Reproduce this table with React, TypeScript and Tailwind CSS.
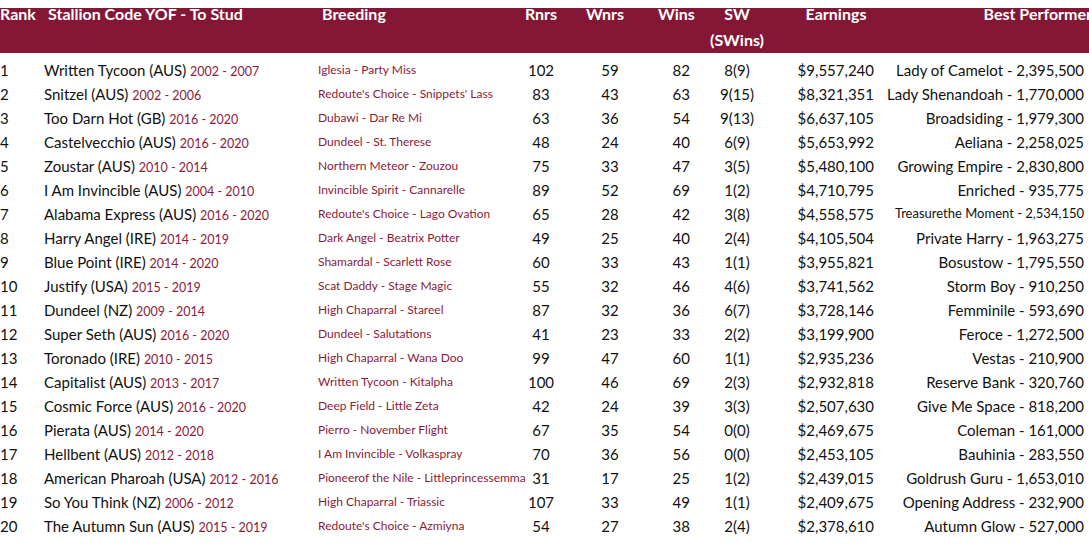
const rows: [string, string, string, string, number, number, number, string, string, string][] = [
  ['1', 'Written Tycoon (AUS)', '2002 - 2007', 'Iglesia - Party Miss', 102, 59, 82, '8(9)', '$9,557,240', 'Lady of Camelot - 2,395,500'],
  ['2', 'Snitzel (AUS)', '2002 - 2006', "Redoute's Choice - Snippets' Lass", 83, 43, 63, '9(15)', '$8,321,351', 'Lady Shenandoah - 1,770,000'],
  ['3', 'Too Darn Hot (GB)', '2016 - 2020', 'Dubawi - Dar Re Mi', 63, 36, 54, '9(13)', '$6,637,105', 'Broadsiding - 1,979,300'],
  ['4', 'Castelvecchio (AUS)', '2016 - 2020', 'Dundeel - St. Therese', 48, 24, 40, '6(9)', '$5,653,992', 'Aeliana - 2,258,025'],
  ['5', 'Zoustar (AUS)', '2010 - 2014', 'Northern Meteor - Zouzou', 75, 33, 47, '3(5)', '$5,480,100', 'Growing Empire - 2,830,800'],
  ['6', 'I Am Invincible (AUS)', '2004 - 2010', 'Invincible Spirit - Cannarelle', 89, 52, 69, '1(2)', '$4,710,795', 'Enriched - 935,775'],
  ['7', 'Alabama Express (AUS)', '2016 - 2020', "Redoute's Choice - Lago Ovation", 65, 28, 42, '3(8)', '$4,558,575', 'Treasurethe Moment - 2,534,150'],
  ['8', 'Harry Angel (IRE)', '2014 - 2019', 'Dark Angel - Beatrix Potter', 49, 25, 40, '2(4)', '$4,105,504', 'Private Harry - 1,963,275'],
  ['9', 'Blue Point (IRE)', '2014 - 2020', 'Shamardal - Scarlett Rose', 60, 33, 43, '1(1)', '$3,955,821', 'Bosustow - 1,795,550'],
  ['10', 'Justify (USA)', '2015 - 2019', 'Scat Daddy - Stage Magic', 55, 32, 46, '4(6)', '$3,741,562', 'Storm Boy - 910,250'],
  ['11', 'Dundeel (NZ)', '2009 - 2014', 'High Chaparral - Stareel', 87, 32, 36, '6(7)', '$3,728,146', 'Femminile - 593,690'],
  ['12', 'Super Seth (AUS)', '2016 - 2020', 'Dundeel - Salutations', 41, 23, 33, '2(2)', '$3,199,900', 'Feroce - 1,272,500'],
  ['13', 'Toronado (IRE)', '2010 - 2015', 'High Chaparral - Wana Doo', 99, 47, 60, '1(1)', '$2,935,236', 'Vestas - 210,900'],
  ['14', 'Capitalist (AUS)', '2013 - 2017', 'Written Tycoon - Kitalpha', 100, 46, 69, '2(3)', '$2,932,818', 'Reserve Bank - 320,760'],
  ['15', 'Cosmic Force (AUS)', '2016 - 2020', 'Deep Field - Little Zeta', 42, 24, 39, '3(3)', '$2,507,630', 'Give Me Space - 818,200'],
  ['16', 'Pierata (AUS)', '2014 - 2020', 'Pierro - November Flight', 67, 35, 54, '0(0)', '$2,469,675', 'Coleman - 161,000'],
  ['17', 'Hellbent (AUS)', '2012 - 2018', 'I Am Invincible - Volkaspray', 70, 36, 56, '0(0)', '$2,453,105', 'Bauhinia - 283,550'],
  ['18', 'American Pharoah (USA)', '2012 - 2016', 'Pioneerof the Nile - Littleprincessemma', 31, 17, 25, '1(2)', '$2,439,015', 'Goldrush Guru - 1,653,010'],
  ['19', 'So You Think (NZ)', '2006 - 2012', 'High Chaparral - Triassic', 107, 33, 49, '1(1)', '$2,409,675', 'Opening Address - 232,900'],
  ['20', 'The Autumn Sun (AUS)', '2015 - 2019', "Redoute's Choice - Azmiyna", 54, 27, 38, '2(4)', '$2,378,610', 'Autumn Glow - 527,000'],
];

// Rank | Stallion | Breeding | Rnrs | Wnrs | Wins | SW | Earnings | Best Performer
const cols = 'grid grid-cols-[44px_274px_202px_42px_96px_32px_94px_90px_215px]';

export default function App() {
  return (
    <div className="w-[1089px] h-[555px] overflow-hidden bg-white text-[#111] font-['Lato','Liberation_Sans',sans-serif] pt-2">
      <div className={`${cols} h-[45px] bg-[#841735] text-white font-bold text-[16px] leading-[12px] whitespace-nowrap`}>
        <div>Rank</div>
        <div className="pl-1">Stallion Code YOF - To Stud</div>
        <div className="pl-1">Breeding</div>
        <div className="text-center">Rnrs</div>
        <div className="text-center -ml-[10px]">Wnrs</div>
        <div className="text-right -mr-[1px]">Wins</div>
        <div className="text-center flex flex-col">
          <span>SW</span>
          <span className="mt-[14px]">(SWins)</span>
        </div>
        <div className="text-center ml-[7px] -mr-[7px]">Earnings</div>
        <div className="text-right -mr-[3px]">Best Performer</div>
      </div>
      <div className="mt-[5px]">
        {rows.map((r) => (
          <div key={r[0]} className={`${cols} h-6 items-center text-[15px] whitespace-nowrap`}>
            <div>{r[0]}</div>
            <div>
              {r[1]} <span className="text-[12.5px] text-[#8b1a3a]">{r[2]}</span>
            </div>
            <div className="text-[12px] text-[#8b1a3a]">{r[3]}</div>
            <div className="text-center">{r[4]}</div>
            <div className="text-center">{r[5]}</div>
            <div className="text-right">{r[6]}</div>
            <div className="text-center">{r[7]}</div>
            <div className="text-right">{r[8]}</div>
            <div className={`text-right pr-[5px] ${r[0] === '7' ? 'text-[13px]' : ''}`}>{r[9]}</div>
          </div>
        ))}
      </div>
    </div>
  );
}
